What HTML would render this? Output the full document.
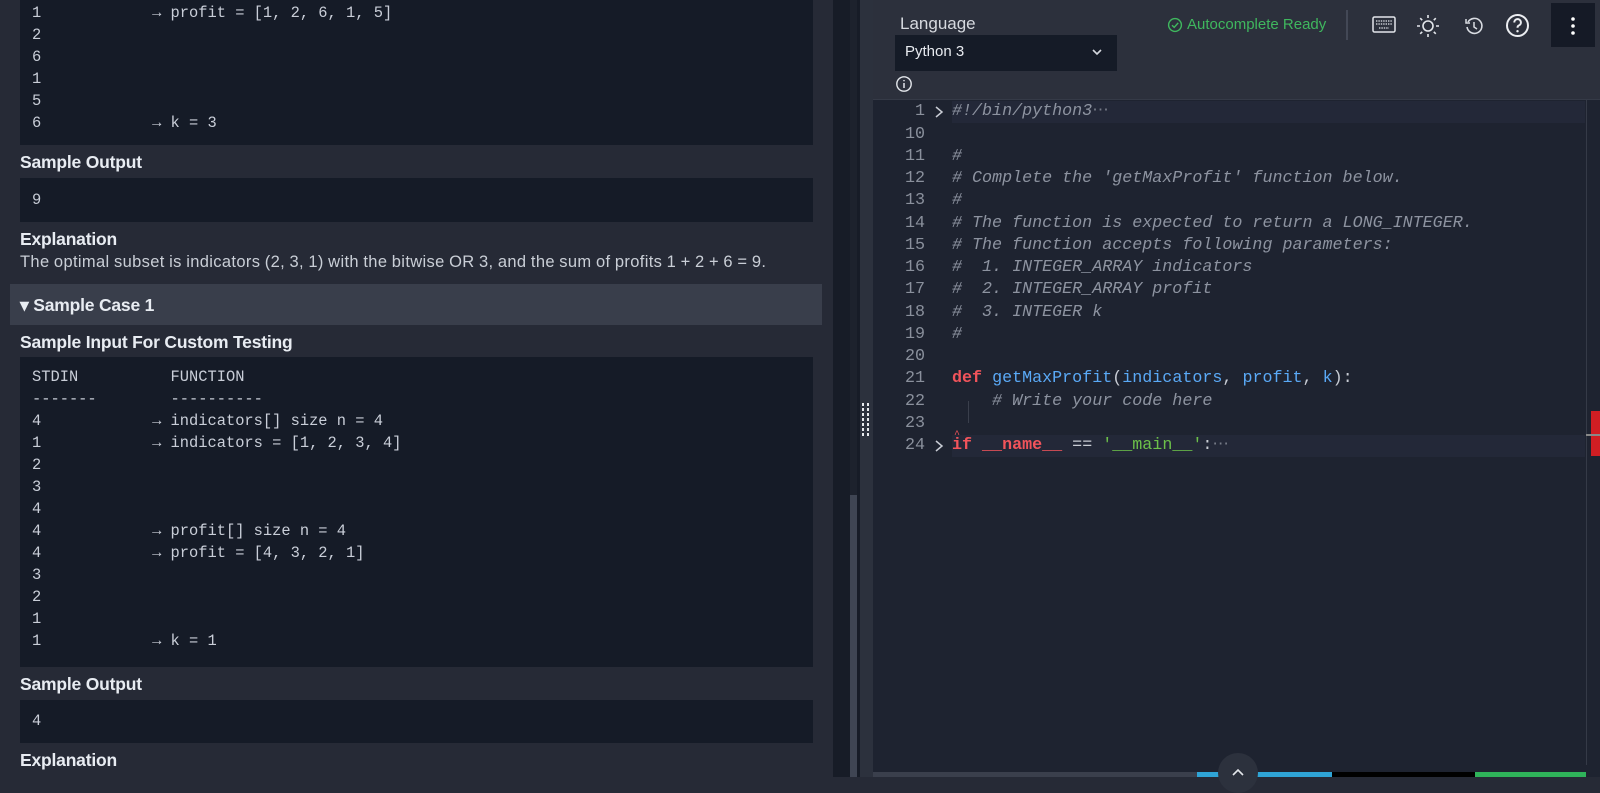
<!DOCTYPE html>
<html><head><meta charset="utf-8"><style>
*{margin:0;padding:0;box-sizing:border-box}
body{width:1600px;height:777px;overflow:hidden;background:#262a36;font-family:"Liberation Sans",sans-serif;position:relative;color:#e6e9ef}
.abs{position:absolute}
.code{background:#151b27;position:absolute;left:20px;width:793px;font-family:"Liberation Mono",monospace;font-size:15.4px;color:#c9ced8}
.code div{height:22px;line-height:22px;white-space:pre;padding-left:12px}
h3{position:absolute;left:20px;font-size:17.5px;font-weight:bold;color:#e8ecf2;letter-spacing:-0.2px}
.p{position:absolute;left:20px;font-size:16.5px;color:#c9ced6;letter-spacing:0.35px;word-spacing:-0.5px}
.ed{font-family:"Liberation Mono",monospace;font-size:16.7px}
.ln{position:absolute;width:52px;text-align:right;left:873px;color:#8a909c}
.cl{position:absolute;left:952px;white-space:pre;color:#c8ccd4}
.cm{color:#8d93a0;font-style:italic}
.kw{color:#f2545b;font-weight:bold}
.fn{color:#5aa9f6}
.st{color:#6cc04a}
</style></head><body>
<!-- left panel -->
<div class="code" style="top:0;height:145px;padding-top:2px">
<div>1            → profit = [1, 2, 6, 1, 5]</div><div>2</div><div>6</div><div>1</div><div>5</div><div>6            → k = 3</div>
</div>
<h3 style="top:152px">Sample Output</h3>
<div class="code" style="top:178px;height:44px;padding-top:11px"><div>9</div></div>
<h3 style="top:229px">Explanation</h3>
<div class="p" style="top:253px">The optimal subset is indicators (2, 3, 1) with the bitwise OR 3, and the sum of profits 1 + 2 + 6 = 9.</div>
<div class="abs" style="left:10px;top:284px;width:812px;height:41px;background:#393e4b"></div>
<h3 style="top:295px;left:20px">▾ Sample Case 1</h3>
<h3 style="top:332px">Sample Input For Custom Testing</h3>
<div class="code" style="top:357px;height:310px;padding-top:9px">
<div>STDIN          FUNCTION</div><div>-------        ----------</div><div>4            → indicators[] size n = 4</div><div>1            → indicators = [1, 2, 3, 4]</div><div>2</div><div>3</div><div>4</div><div>4            → profit[] size n = 4</div><div>4            → profit = [4, 3, 2, 1]</div><div>3</div><div>2</div><div>1</div><div>1            → k = 1</div>
</div>
<h3 style="top:674px">Sample Output</h3>
<div class="code" style="top:700px;height:43px;padding-top:10px"><div>4</div></div>
<h3 style="top:750px">Explanation</h3>
<!-- divider -->
<div class="abs" style="left:833px;top:0;width:27px;height:777px;background:#171c27"></div>
<div class="abs" style="left:850px;top:0;width:7px;height:777px;background:#1d222d"></div>
<div class="abs" style="left:850px;top:495px;width:7px;height:282px;background:#3f4553"></div>
<div class="abs" style="left:860px;top:0;width:13px;height:777px;background:#2c313d"></div>
<svg class="abs" style="left:861px;top:402px" width="10" height="40"><g fill="#e8eaee">
<rect x="1" y="1" width="2" height="3"/><rect x="6" y="1" width="2" height="3"/><rect x="1" y="6" width="2" height="3"/><rect x="6" y="6" width="2" height="3"/><rect x="1" y="11" width="2" height="3"/><rect x="6" y="11" width="2" height="3"/><rect x="1" y="16" width="2" height="3"/><rect x="6" y="16" width="2" height="3"/><rect x="1" y="21" width="2" height="3"/><rect x="6" y="21" width="2" height="3"/><rect x="1" y="26" width="2" height="3"/><rect x="6" y="26" width="2" height="3"/><rect x="1" y="31" width="2" height="3"/><rect x="6" y="31" width="2" height="3"/></g></svg>
<!-- right header -->
<div class="abs" style="left:873px;top:0;width:727px;height:100px;background:#2c303c"></div>
<div class="abs" style="left:900px;top:14px;font-size:17px;color:#d6d9df">Language</div>
<div class="abs" style="left:895px;top:35px;width:222px;height:36px;background:#151b27"></div>
<div class="abs" style="left:905px;top:43px;font-size:15px;color:#e8ebf0">Python 3</div>
<svg class="abs" style="left:1091px;top:47px" width="12" height="10"><path d="M2 3l4 4 4-4" stroke="#d5d8de" stroke-width="1.6" fill="none"/></svg>
<svg class="abs" style="left:895px;top:75px" width="18" height="18"><circle cx="9" cy="9" r="7.2" stroke="#e3e6eb" stroke-width="1.4" fill="none"/><path d="M9 8v5M9 5v1.3" stroke="#e3e6eb" stroke-width="1.5"/></svg>
<svg class="abs" style="left:1167px;top:17px" width="16" height="16"><circle cx="8" cy="8" r="6.4" stroke="#3fb75e" stroke-width="1.4" fill="none"/><path d="M5 8.2l2.2 2.2 4-4.5" stroke="#3fb75e" stroke-width="1.4" fill="none"/></svg>
<div class="abs" style="left:1187px;top:16px;font-size:15px;color:#3fb75e">Autocomplete Ready</div>
<div class="abs" style="left:1346px;top:10px;width:2px;height:30px;background:#434856"></div>
<svg class="abs" style="left:1372px;top:16px" width="24" height="18"><rect x="1" y="1" width="22" height="15" rx="1.5" stroke="#e3e6eb" stroke-width="1.5" fill="none"/><path d="M4 5h16M4 8h16M7 12h10" stroke="#e3e6eb" stroke-width="1.3" stroke-dasharray="1.4 1"/></svg>
<svg class="abs" style="left:1416px;top:14px" width="24" height="24"><circle cx="12" cy="12" r="5" stroke="#e3e6eb" stroke-width="1.6" fill="none"/><path d="M12 1v3M12 20v3M1 12h3M20 12h3M4.2 4.2l2 2M17.8 17.8l2 2M4.2 19.8l2-2M17.8 6.2l2-2" stroke="#e3e6eb" stroke-width="1.6"/></svg>
<svg class="abs" style="left:1464px;top:16px" width="20" height="20"><path d="M4 6A7.5 7.5 0 1 1 3 11" stroke="#d9dce2" stroke-width="1.6" fill="none"/><path d="M2 3v4h4" stroke="#d9dce2" stroke-width="1.5" fill="none"/><path d="M10 6v5l3 2" stroke="#d9dce2" stroke-width="1.5" fill="none"/></svg>
<svg class="abs" style="left:1505px;top:13px" width="25" height="25"><circle cx="12.5" cy="12.5" r="10.5" stroke="#eceef2" stroke-width="2" fill="none"/><path d="M9.3 9.5a3.3 3.3 0 1 1 4.5 3c-1 .5-1.3 1-1.3 2.2" stroke="#eceef2" stroke-width="2" fill="none"/><circle cx="12.5" cy="18.2" r="1.2" fill="#eceef2"/></svg>
<div class="abs" style="left:1551px;top:3px;width:44px;height:44px;background:#151a26"></div>
<svg class="abs" style="left:1570px;top:16px" width="6" height="20"><circle cx="3" cy="3" r="1.8" fill="#fff"/><circle cx="3" cy="10" r="1.8" fill="#fff"/><circle cx="3" cy="17" r="1.8" fill="#fff"/></svg>
<!-- editor -->
<div class="abs" style="left:873px;top:100px;width:727px;height:677px;background:#1e2330"></div>
<div class="abs" style="left:873px;top:99px;width:727px;height:1px;background:#353a47"></div>
<div class="abs" style="left:952px;top:101px;width:633px;height:22px;background:#232838"></div>
<div class="abs" style="left:952px;top:435px;width:633px;height:22px;background:#232838"></div>
<div class="abs" style="left:1586px;top:100px;width:1px;height:665px;background:#353a47"></div>
<div class="abs" style="left:1591px;top:411px;width:9px;height:45px;background:#d01e23"></div>
<div class="abs" style="left:1586px;top:434px;width:14px;height:2px;background:#888"></div>
<div class="abs" style="left:968px;top:401px;width:1px;height:22px;background:#3a3f4c"></div>
<div class="ed">
<div class="ln" style="top:101px;line-height:22px">1</div>
<svg class="abs" style="left:933px;top:105px" width="12" height="14"><path d="M3 2l6 5-6 5" stroke="#c8ccd4" stroke-width="1.5" fill="none"/></svg>
<div class="cl" style="top:101px;line-height:22px"><span class="cm">#!/bin/python3</span><span style="color:#777c88">⋯</span></div>
<div class="ln" style="top:124px;line-height:22px">10</div>
<div class="ln" style="top:146px;line-height:22px">11</div><div class="cl cm" style="top:146px;line-height:22px">#</div>
<div class="ln" style="top:168px;line-height:22px">12</div><div class="cl cm" style="top:168px;line-height:22px"># Complete the 'getMaxProfit' function below.</div>
<div class="ln" style="top:190px;line-height:22px">13</div><div class="cl cm" style="top:190px;line-height:22px">#</div>
<div class="ln" style="top:213px;line-height:22px">14</div><div class="cl cm" style="top:213px;line-height:22px"># The function is expected to return a LONG_INTEGER.</div>
<div class="ln" style="top:235px;line-height:22px">15</div><div class="cl cm" style="top:235px;line-height:22px"># The function accepts following parameters:</div>
<div class="ln" style="top:257px;line-height:22px">16</div><div class="cl cm" style="top:257px;line-height:22px">#  1. INTEGER_ARRAY indicators</div>
<div class="ln" style="top:279px;line-height:22px">17</div><div class="cl cm" style="top:279px;line-height:22px">#  2. INTEGER_ARRAY profit</div>
<div class="ln" style="top:302px;line-height:22px">18</div><div class="cl cm" style="top:302px;line-height:22px">#  3. INTEGER k</div>
<div class="ln" style="top:324px;line-height:22px">19</div><div class="cl cm" style="top:324px;line-height:22px">#</div>
<div class="ln" style="top:346px;line-height:22px">20</div>
<div class="ln" style="top:368px;line-height:22px">21</div><div class="cl" style="top:368px;line-height:22px"><span class="kw">def</span> <span class="fn">getMaxProfit</span>(<span class="fn">indicators</span>, <span class="fn">profit</span>, <span class="fn">k</span>):</div>
<div class="ln" style="top:391px;line-height:22px">22</div><div class="cl cm" style="top:391px;line-height:22px">    # Write your code here</div>
<div class="ln" style="top:413px;line-height:22px">23</div>
<div class="ln" style="top:435px;line-height:22px">24</div>
<svg class="abs" style="left:933px;top:439px" width="12" height="14"><path d="M3 2l6 5-6 5" stroke="#c8ccd4" stroke-width="1.5" fill="none"/></svg>
<div class="cl" style="top:435px;line-height:22px"><span class="kw">if</span> <span class="kw">__name__</span> == <span class="st">'__main__'</span>:<span style="color:#777c88">⋯</span></div>
<div class="abs" style="left:954px;top:430px;color:#f2545b;font-size:10px">^</div>
</div>
<!-- bottom -->
<div class="abs" style="left:873px;top:772px;width:713px;height:5px;background:#3a3f4c"></div>
<div class="abs" style="left:1197px;top:772px;width:135px;height:5px;background:#2fa4d6"></div>
<div class="abs" style="left:1332px;top:772px;width:143px;height:5px;background:#000"></div>
<div class="abs" style="left:1475px;top:772px;width:111px;height:5px;background:#2fb35a"></div>
<div class="abs" style="left:1218px;top:753px;width:40px;height:40px;border-radius:50%;background:#2c313d"></div>
<svg class="abs" style="left:1230px;top:767px" width="16" height="10"><path d="M3 8l5-5 5 5" stroke="#e3e6eb" stroke-width="1.6" fill="none"/></svg>
</body></html>
